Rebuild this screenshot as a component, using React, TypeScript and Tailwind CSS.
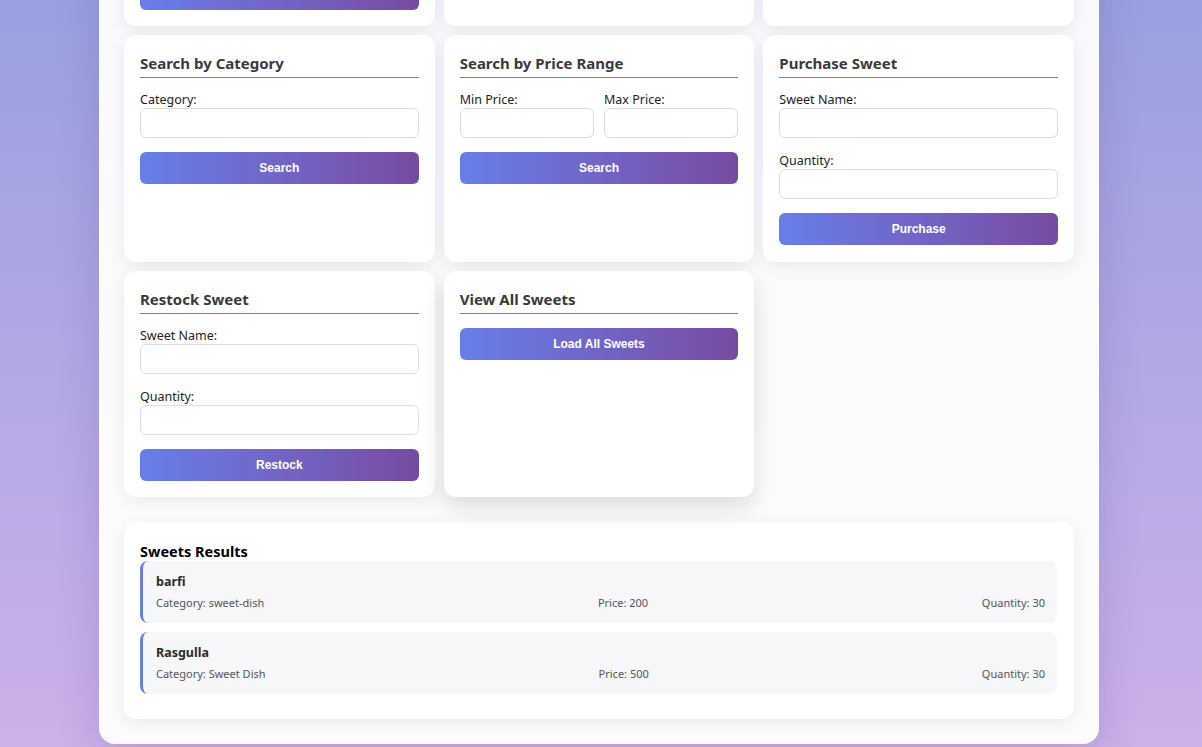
import React from "react";

const font = { fontFamily: '"Noto Sans", "Open Sans", sans-serif' };

type Field = { label: string };

function Label({ text }: { text: string }) {
  return <label className="block h-4 text-[12.5px] leading-4 text-[#222]">{text}</label>;
}

function Input() {
  return (
    <input
      type="text"
      className="block h-[30px] w-full rounded-md border border-[#dcdcdc] bg-white px-2 text-[13px] outline-none"
    />
  );
}

function GradientButton({ text }: { text: string }) {
  return (
    <button
      className="block h-8 w-full rounded-md bg-gradient-to-r from-[#667eea] to-[#764ba2] text-[12px] font-bold text-white"
      style={{ fontFamily: '"Liberation Sans", Arial, sans-serif' }}
    >
      {text}
    </button>
  );
}

function Card({
  title,
  fields = [],
  pair,
  button,
  lifted,
}: {
  title: string;
  fields?: Field[];
  pair?: [string, string];
  button?: string;
  lifted?: boolean;
}) {
  return (
    <div
      className={
        "rounded-xl bg-white px-4 pt-4 pb-[16.5px] " +
        (lifted
          ? "shadow-[0_10px_25px_rgba(0,0,0,0.13)]"
          : "shadow-[0_4px_18px_rgba(0,0,0,0.08)]")
      }
    >
      <h3 className="mb-[14px] h-[27px] border-b border-[#6f82b2] text-[15px] font-bold leading-6 text-[#3a3a3a]">
        {title}
      </h3>
      {pair && (
        <div className="mb-[14px] flex gap-[10px]">
          {pair.map((p) => (
            <div key={p} className="flex-1">
              <Label text={p} />
              <Input />
            </div>
          ))}
        </div>
      )}
      {fields.map((f, i) => (
        <div key={f.label} className={i === fields.length - 1 ? "mb-[14px]" : "mb-[15px]"}>
          <Label text={f.label} />
          <Input />
        </div>
      ))}
      {button && <GradientButton text={button} />}
    </div>
  );
}

const sweets = [
  { name: "barfi", category: "sweet-dish", price: 200, quantity: 30 },
  { name: "Rasgulla", category: "Sweet Dish", price: 500, quantity: 30 },
];

export default function App() {
  return (
    <div
      className="h-[747px] overflow-hidden bg-gradient-to-b from-[#99a0df] to-[#ccb0e9]"
      style={font}
    >
      <div className="-mt-[347.5px] ml-[99px] w-[1000px] rounded-2xl bg-white/95 px-[25px] pt-[25px] pb-[25px] shadow-[0_10px_40px_rgba(60,40,120,0.18)]">
        <div className="grid grid-cols-3 gap-[9px]">
          <Card
            title="Add New Sweet"
            fields={[
              { label: "Name:" },
              { label: "Category:" },
              { label: "Price:" },
              { label: "Quantity:" },
            ]}
            button="Add Sweet"
          />
          <Card title="Update Sweet" fields={[{ label: "Sweet ID:" }]} />
          <Card title="Delete Sweet" fields={[{ label: "Sweet ID:" }]} />

          <Card title="Search by Category" fields={[{ label: "Category:" }]} button="Search" />
          <Card title="Search by Price Range" pair={["Min Price:", "Max Price:"]} button="Search" />
          <Card
            title="Purchase Sweet"
            fields={[{ label: "Sweet Name:" }, { label: "Quantity:" }]}
            button="Purchase"
          />

          <Card
            title="Restock Sweet"
            fields={[{ label: "Sweet Name:" }, { label: "Quantity:" }]}
            button="Restock"
          />
          <Card title="View All Sweets" button="Load All Sweets" lifted />
        </div>

        <div className="mt-[25px] rounded-xl bg-white pt-5 pr-[17px] pb-[25px] pl-4 shadow-[0_4px_18px_rgba(0,0,0,0.08)]">
          <h3 className="mb-px text-[14.5px] font-bold leading-[18px] text-black">Sweets Results</h3>
          <div className="flex flex-col gap-[9px]">
            {sweets.map((s) => (
              <div
                key={s.name}
                className="rounded-lg border-l-[3px] border-[#667eea] bg-[#f6f7f9] py-3 pr-3 pl-[13px]"
              >
                <div className="text-[12.5px] font-bold leading-[18px] text-[#2a2a2a]">{s.name}</div>
                <div className="mt-1 flex justify-between text-[11px] leading-4 text-[#555]">
                  <span>Category: {s.category}</span>
                  <span>Price: {s.price}</span>
                  <span>Quantity: {s.quantity}</span>
                </div>
              </div>
            ))}
          </div>
        </div>
      </div>
    </div>
  );
}
